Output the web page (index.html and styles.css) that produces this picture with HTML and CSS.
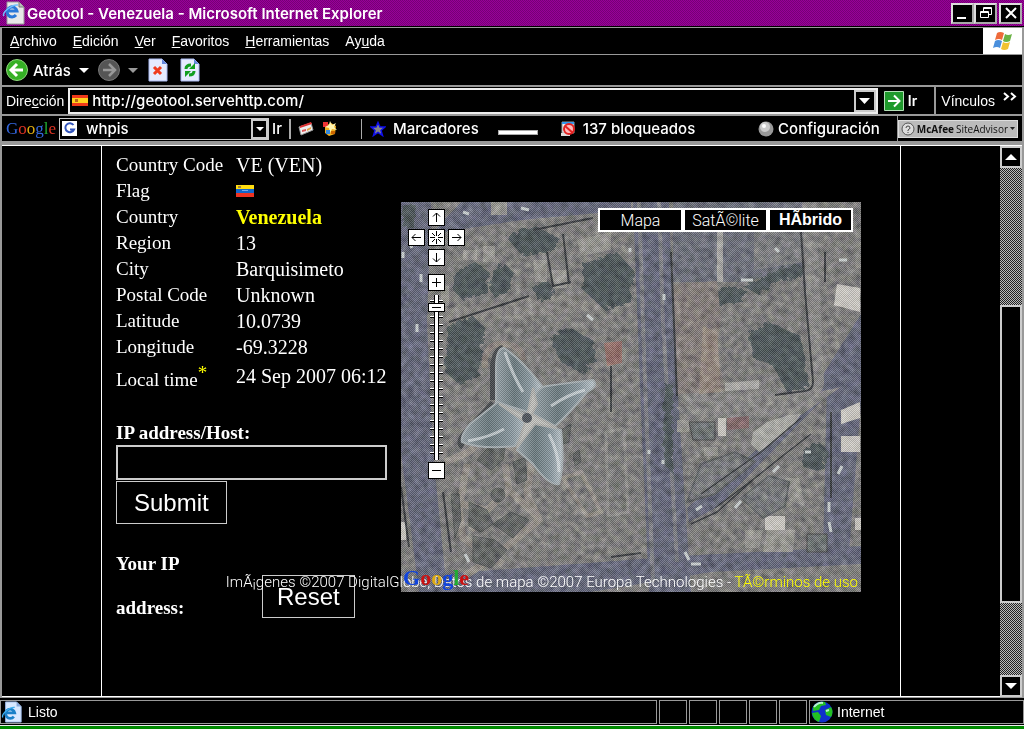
FILE: index.html
```html
<!DOCTYPE html>
<html lang="es">
<head>
  <meta charset="UTF-8">
  <meta name="viewport" content="width=device-width, initial-scale=1.0">
  <title>Geotool - Venezuela</title>
  <link rel="stylesheet" href="styles.css">
</head>
<body>

<header class="titlebar">
  <svg class="icon-page" width="24" height="24" viewBox="0 0 24 24">
    <path d="M6 1h12l5 5v17H6z" fill="#e8e8e8" stroke="#999"/>
    <path d="M18 1v5h5" fill="#bbb" stroke="#777"/>
    <path d="M15 14a5 5 0 1 1 1-4H7" fill="none" stroke="#2a78d8" stroke-width="3"/>
    <path d="M3 15c-3-3 8-12 14-11" fill="none" stroke="#70c0ff" stroke-width="1.5"/>
  </svg>
  <h1>Geotool - Venezuela - Microsoft Internet Explorer</h1>
  <div class="window-buttons">
    <button aria-label="Minimizar"><svg width="16" height="16"><path d="M2 13h9" stroke="#fff" stroke-width="2"/></svg></button>
    <button aria-label="Restaurar"><svg width="16" height="16" fill="none" stroke="#fff"><path d="M5.500 6V2.500h8V9.500H11M5 3.500h9"/><path d="M2.500 6.500h8v6h-8zM2 7.500h9"/></svg></button>
    <button class="close" aria-label="Cerrar"><svg width="16" height="16"><path d="M3 3l10 10M13 3L3 13" stroke="#fff" stroke-width="2"/></svg></button>
  </div>
</header>

<nav class="menubar">
  <a href="#"><u>A</u>rchivo</a>
  <a href="#"><u>E</u>dición</a>
  <a href="#"><u>V</u>er</a>
  <a href="#"><u>F</u>avoritos</a>
  <a href="#"><u>H</u>erramientas</a>
  <a href="#">Ay<u>u</u>da</a>
  <div class="throbber">
    <svg width="20" height="20" viewBox="0 0 20 20">
      <path d="M4 2q3-2 7 0L9 9Q6 7 2 9z" fill="#ee6a3a"/>
      <path d="M12 3q3 2 7 0l-2 7q-4 2-7 0z" fill="#6bb345"/>
      <path d="M2 10q3-2 7 0l-2 7q-3-2-7 0z" fill="#4a8fdc"/>
      <path d="M10 11q3 2 7 0l-2 7q-4 2-7 0z" fill="#f2c230"/>
    </svg>
  </div>
</nav>

<div class="toolbar">
  <button class="tool">
    <svg width="22" height="22" viewBox="0 0 22 22"><circle cx="11" cy="11" r="10.500" fill="#35b025" stroke="#8fd87c"/><path d="M17 11H6M11 5l-6 6 6 6" fill="none" stroke="#fff" stroke-width="3"/></svg>
    <span>Atrás</span>
  </button>
  <svg class="caret" width="10" height="5"><path d="M0 0h10L5 5z" fill="#fff"/></svg>
  <button class="tool forward" aria-label="Adelante">
    <svg width="22" height="22" viewBox="0 0 22 22"><circle cx="11" cy="11" r="10.500" fill="#555" stroke="#777"/><path d="M5 11h11M11 5l6 6-6 6" fill="none" stroke="#999" stroke-width="2.500"/></svg>
  </button>
  <svg class="caret" width="10" height="5"><path d="M0 0h10L5 5z" fill="#999"/></svg>
  <button class="tool stop" aria-label="Detener">
    <svg width="20" height="24" viewBox="0 0 20 24"><path d="M1 1h13l5 5v17H1z" fill="#e6ecff" stroke="#a8b8f0"/><path d="M14 1l5 5h-5z" fill="#6688dd"/><path d="M6 9l7 7M13 9l-7 7" stroke="#f03c1e" stroke-width="3"/></svg>
  </button>
  <button class="tool refresh" aria-label="Actualizar">
    <svg width="20" height="24" viewBox="0 0 20 24"><path d="M1 1h13l5 5v17H1z" fill="#e6ecff" stroke="#a8b8f0"/><path d="M14 1l5 5h-5z" fill="#6688dd"/><path d="M6 11q0-4 5-4M14 13q0 4-5 4" fill="none" stroke="#12a020" stroke-width="3"/><path d="M15 5v6H9zM5 19v-6h6z" fill="#12a020"/></svg>
  </button>
</div>

<form class="addressbar">
  <label for="address">Dire<u>c</u>ción</label>
  <div class="address-box">
    <svg width="16" height="11"><path d="M0 0h16v11H0z" fill="#f03a1a"/><path d="M0 3h16v5H0z" fill="#ffd21e"/><path d="M3 4h3v3H3z" fill="#b8661a"/></svg>
    <input id="address" type="text" value="http://geotool.servehttp.com/">
    <button class="drop" type="button" aria-label="Ver direcciones"><svg width="11" height="6"><path d="M0 0h11L5.500 6z" fill="#fff"/></svg></button>
  </div>
  <button class="go" type="button">
    <svg width="20" height="20"><path d="M.5.500h19v19H.5z" fill="#1f9a2c" stroke="#b5e0b8"/><path d="M4 10h11M10 4.500l5.500 5.500-5.500 5.500" fill="none" stroke="#fff" stroke-width="2"/></svg>
    <span>Ir</span>
  </button>
  <a class="links" href="#">Vínculos <svg width="14" height="17" fill="none" stroke="#fff" stroke-width="2"><path d="M1 1l4 3.500L1 8M8 1l4 3.500L8 8"/></svg></a>
</form>

<div class="googlebar">
  <a class="google-logo" href="#"><span class="b">G</span><span class="r">o</span><span class="y">o</span><span class="b">g</span><span class="g">l</span><span class="r">e</span></a>
  <div class="search-box">
    <svg width="15" height="15"><path d="M0 0h15v15H0z" fill="#fff"/><path d="M11.500 4A4.500 4.500 0 1 0 12 8.500H8" fill="none" stroke="#3355bb" stroke-width="2"/></svg>
    <input type="text" value="whpis" aria-label="Buscar en Google">
    <button class="drop" aria-label="Historial"><svg width="8" height="4"><path d="M0 0h8L4 4z" fill="#fff"/></svg></button>
  </div>
  <button class="search-go">Ir</button>
  <div class="extras">
    <svg width="16" height="16"><path d="M1 6l12-4 2 7-12 5z" fill="#eee" stroke="#999"/><path d="M2 5l11-4 1 2-12 4z" fill="#d33"/><path d="M4 9l4-1v2l-4 1z" fill="#d55"/><path d="M9 8l4-2v2l-4 2z" fill="#e8a040"/></svg>
    <svg width="16" height="16"><path d="M3 5l6-3 5 3-1 8-6 2-4-3z" fill="#f0b020"/><path d="M1 1h5v5H1z" fill="#e33"/><path d="M8 0l2 4 4-2-2 4 3 3-5-1-2 4-1-5-4-1 4-2z" fill="#fff4b0"/><path d="M4 9h4v4H4z" fill="#38d"/><path d="M9 10h4v3H9z" fill="#c60"/></svg>
  </div>
  <button class="bookmarks">
    <svg width="16" height="16" viewBox="0 0 16 16"><path d="M8 1.500l2 4.500h5l-4 3.500 1.500 5L8 11.500l-4.500 3 1.500-5L1 6h5z" fill="#888" stroke="#1010ee" stroke-width="1.500"/></svg>
    Marcadores
  </button>
  <div class="pagerank"></div>
  <button class="blocked">
    <svg width="16" height="16"><path d="M1 1h12v11H1z" fill="#eee" stroke="#999"/><path d="M1 1h12v2H1z" fill="#39e"/><path d="M0 12h9v3H0z" fill="#ddd"/><circle cx="8" cy="8" r="5" fill="#fbb" stroke="#e32222" stroke-width="2"/><path d="M4 5l8 7" stroke="#e32222" stroke-width="2"/></svg>
    137 bloqueados
  </button>
  <button class="settings">
    <svg width="16" height="16"><circle cx="8" cy="8" r="7.500" fill="#999"/><circle cx="7" cy="6" r="5" fill="#ccc"/><circle cx="6" cy="5" r="2" fill="#fff"/></svg>
    Configuración
  </button>
  <div class="advisor">
    <button>
      <svg width="14" height="14"><circle cx="7" cy="7" r="6" fill="#ddd" stroke="#555"/><path d="M5 6q0-2 2-2t2 2q0 1-2 2v1M7 10v1" fill="none" stroke="#444"/></svg>
      <b>McAfee</b> SiteAdvisor
      <svg width="5" height="3"><path d="M0 0h5L2.500 3z" fill="#222"/></svg>
    </button>
  </div>
</div>

<div class="viewport">
  <main class="page">
    <section class="info">
      <table>
        <tr><th>Country Code</th><td>VE (VEN)</td></tr>
        <tr><th>Flag</th><td><svg class="flag" width="18" height="12"><path d="M0 0h18v4H0z" fill="#ffdd11"/><path d="M0 4h18v4H0z" fill="#1166cc"/><path d="M0 8h18v4H0z" fill="#ee3322"/><path d="M2 1h3v2H2z" fill="#a08040"/><path d="M6 5h6v1H6z" fill="#77aaee"/></svg></td></tr>
        <tr><th>Country</th><td><strong>Venezuela</strong></td></tr>
        <tr><th>Region</th><td>13</td></tr>
        <tr><th>City</th><td>Barquisimeto</td></tr>
        <tr><th>Postal Code</th><td>Unknown</td></tr>
        <tr><th>Latitude</th><td>10.0739</td></tr>
        <tr><th>Longitude</th><td>-69.3228</td></tr>
        <tr class="time"><th>Local time<a href="#">*</a></th><td>24 Sep 2007 06:12</td></tr>
      </table>
      <form class="lookup">
        <label for="host">IP address/Host:</label>
        <input id="host" type="text">
        <button type="button">Submit</button>
        <div class="your-ip">
          <p>Your IP address:</p>
          <button type="reset">Reset</button>
        </div>
      </form>
    </section>

    <section class="map">
      <svg class="satellite" viewBox="0 0 460 390" preserveAspectRatio="xMidYMid slice">
        <defs>
          <filter id="grain" x="0" y="0" width="100%" height="100%" color-interpolation-filters="sRGB">
            <feTurbulence type="fractalNoise" baseFrequency="0.15" numOctaves="4" seed="7"/>
            <feColorMatrix values="1 0.4 0 0 -0.2  0.9 0.5 0 0 -0.2  0.9 0.3 0.2 0 -0.2  0 0 0 0 1"/>
          </filter>
          <filter id="rough" x="-10%" y="-10%" width="120%" height="120%"><feTurbulence baseFrequency="0.12" numOctaves="2" seed="3"/><feDisplacementMap in="SourceGraphic" scale="7"/></filter>
          <pattern id="dither" width="2" height="2" patternUnits="userSpaceOnUse">
            <path d="M0 0h1v1H0zM1 1h1v1H1z" fill="#000"/><path d="M1 0h1v1H1zM0 1h1v1H0z" fill="#fff"/>
          </pattern>
          <linearGradient id="petal" x1="0" y1="0" x2="1" y2="0">
            <stop offset="0" stop-color="#9aa6ac"/><stop offset=".4" stop-color="#6a7a7f"/><stop offset=".75" stop-color="#8d9ca4"/><stop offset="1" stop-color="#c4ced4"/>
          </linearGradient>
        </defs>
        <rect width="460" height="390" fill="#7e7d7c"/>
        <!-- streets -->
        <g fill="#63667a">
          <path d="M0 0h30l-4 120 6 130 14 140H18L0 250z"/>
          <path d="M30 32l90-14 110-10V0H60zM232 0h36l4 120 18 270h-42l-8-180z"/>
          <path d="M460 112v46L318 304l-30 16-2-14 110-92z"/>
          <path d="M40 372l240-18 180-10v18l-150 8-120 20H40z"/>
          <path d="M272 0h130v66l-60 14h-70z" fill="#6b6e7a"/>
          <path d="M426 180l34-40v60l-12 150h-26z"/>
        </g>
        <path d="M238 0l6 180 8 200M258 0l4 120 14 240" fill="none" stroke="#7d7e84" stroke-width="4"/>
        <path d="M408 0l8 180q0 8-9 9l-100 12-22-6" fill="none" stroke="#8a8988" stroke-width="14"/>
        <path d="M30 108l120-14 82-4v14L160 112l-126 10z" fill="#888683"/>
        <path d="M275 205l120-10 45-10-40 28-110 8z" fill="#878685"/>
        <!-- trees -->
        <g fill="#4b5558" filter="url(#rough)">
          <path d="M104 34l26-12 26 12-6 12-30 6z"/>
          <path d="M52 68l20-10 14 10-2 20-24 8-10-10z"/>
          <path d="M92 66l10-6 10 10-6 16-14 8-6-10z"/>
          <path d="M180 60l34-12 18 20-4 30-26 8-22-20z"/>
          <path d="M148 134l18-10 24 12 4 22-14 12-22-12z"/>
          <path d="M46 122l24-10 12 12-6 50-20 6-14-12z"/>
          <path d="M346 130l20-12 32 14 8 52-22 4-14-26-20-8z"/>
          <path d="M306 90l20-8 20 6-8 10-24 4zM340 82l40-18 20-2v10l-30 8-14 12z"/>
          <path d="M130 84l12-10 10 12-4 8-12 4zM400 246l16-8 10 10-6 20-20-6z"/>
          <path d="M262 180l8 0 0 90-9-10zM0 0h12v24H0z"/>
        </g>
        <!-- roofs -->
        <path d="M272 82l44-3 4 38-4 30 8 42-48 3z" fill="#857d7a"/>
        <path d="M302 124l14 6 4 60-22 2z" fill="#93857c"/>
        <path d="M203 141l18-2v22l-15 3z" fill="#956d67"/>
        <path d="M316 30h6v50h-6zM324 181l34-3v9l-34 2z" fill="#aaa9a6"/>
        <path d="M353 30h50v30l-50 8z" fill="#7c7d80"/>
        <g fill="#999893">
          <path d="M90 0h16v13H90zM176 38l34-8v18l-30 6zM132 58h14v22h-12zM150 68h16v18h-14zM82 44h12v16H82zM62 48h14v10H62z"/>
          <path d="M352 230l14-10 22-7 12-1-8 12-16 14-18 12-8-8z" fill="#adada8"/>
          <path d="M317 216h8v18h-8zM364 314h20v14h-20zM440 208l19-8v16l-19 6zM440 234h19v16h-19zM436 82l23 4v24l-26-7zM0 320h5v18H0zM454 316h6v12h-6z" fill="#cfccc6"/>
          <path d="M276 218h12v12h-12zM303 245h14v9h-14zM366 328h28l-2 22h-30zM384 276h14l6 28-16-6zM344 328h18l-4 18h-14zM40 84h8v20h-8zM208 18l18-4v14z"/>
        </g>
        <path d="M288 220h26v18h-22zM406 332h20v18h-20z" fill="#6b7172" stroke="#444"/>
        <path d="M326 216l22-2v12l-22 2z" fill="#85686a"/>
        <path d="M205 230l18-4 4 84-20 4z" fill="#7a7a79" stroke="#908f8c" stroke-width="3"/>
        <path d="M300 262l34-12 20 10-40 32-28 8zM340 296l28-22 20 6-4 24-22 12z" fill="#76787b" stroke="#5c6062" stroke-width="2"/>
        <g fill="none" stroke="#34373b" stroke-width="2">
          <path d="M400 30l4 60 8 90q0 8-8 9l-30 4M146 50l6 34 18-4M162 32l6 50M48 120l80-26M270 50l6 144M210 164v46M0 285l8 60M42 290l8 60M210 355l30-4M430 210v86M424 50v30M192 16l-60 12"/>
          <path d="M314 306l40-30 30-24 26-20M290 322l26-12 36-32M300 292l60-42 40-34" stroke-width="1.500"/>
        </g>
        <!-- garden paths -->
        <g fill="none" stroke="#98928b" stroke-width="7">
          <path d="M44 260l24-10 14-14 50 16-6 40 12 26-44 36-30 20M66 262l-8 44 4 30 40 26M60 302l26 6 22-20 30 28M108 288l-4-26M86 308l-16 20"/>
          <path d="M84 166q-2-26 20-24 18 2 18 16" stroke-width="6" stroke="#8f867f"/>
          <path d="M162 276l24 38 14-4-20-40z" stroke-width="4"/>
        </g>
        <g fill="#5f6261" stroke="#505454">
          <path d="M76 258l16-18 12 6-2 12-12 10zM68 300l18 8 6 14-12 8-12-6zM92 322l18-12 18 8-16 18zM72 334l22 4 12 10-16 18-18-6zM112 260l12-4 2 22-10 4z"/>
          <circle cx="97" cy="293" r="7"/>
          <path d="M50 292h8l2 26-6 18zM160 228l10-6-2 18-6 2zM172 252l6-4 2 12-6 4z"/>
        </g>
        <rect width="460" height="390" filter="url(#grain)" style="mix-blend-mode: overlay" opacity=".35"/>
        <!-- flower shaped roof -->
        <g fill="none" stroke="#44484b" stroke-width="6">
          <path d="M92 198V164q2-16 10-18"/>
          <path d="M92 201l-28 30q-8 10-2 14"/>
        </g>
        <g fill="url(#petal)" stroke="#a9b2b6" stroke-width="2">
          <path d="M95 200V166q0-20 8-20 16 10 38 38l-14 26z"/>
          <path d="M132 212q-2-26 14-28 28-4 46-6 6 6-6 12-18 22-32 34z"/>
          <path d="M128 214l-31-14-28 22q-10 12-8 18 20 8 53 4z"/>
          <path d="M128 220l-12 28 16 14q16 22 26 20 6-20 2-54z"/>
          <path d="M136 202l-5 10 25 14-22-4-18 24 8-26-26-18 28 12 6-28z" fill="#c4c4c0" stroke="#b4b4b0"/>
        </g>
        <path d="M104 150q8 24 18 40M150 204q18-12 34-16M67 239q22-4 36-12M148 232q10 20 10 38" fill="none" stroke="#e4eaec" stroke-width="3" opacity=".7"/>
        <circle cx="126" cy="216" r="5" fill="#4e545c"/>
        <!-- cars -->
        <path d="M8 40l3 6M16 122v8M20 72v8M2 50v6M186 113l6 5M229 46v4M263 92v6M248 248v4M262 258v4M284 350l4 8M290 362h10M295 308l6-4M334 306l6-7M372 270l6-6M404 250h6M437 272l4-8M428 300v10M428 320l2 10M64 352l4 8M438 58h8M374 46l4 4M62 10l6 2M120 6l8 2M340 78h12" fill="none" stroke="#cdd4d4" stroke-width="3"/>
        <rect width="460" height="390" fill="url(#dither)" opacity=".15"/>
      </svg>

      <div class="pan">
        <button class="up" aria-label="Arriba"><svg width="15" height="15"><path d="M7.500 12V3M4 6.500L7.500 3 11 6.500"/></svg></button>
        <button class="left" aria-label="Izquierda"><svg width="15" height="15"><path d="M12 7.500H3M6.500 4L3 7.500 6.500 11"/></svg></button>
        <button class="center" aria-label="Centrar"><svg width="15" height="15"><path d="M7.500 1v5M7.500 9v5M1 7.500h5M9 7.500h5M3 3l3 3M12 3L9 6M3 12l3-3M12 12L9 9"/></svg></button>
        <button class="right" aria-label="Derecha"><svg width="15" height="15"><path d="M3 7.500h9M8.500 4L12 7.500 8.500 11"/></svg></button>
        <button class="down" aria-label="Abajo"><svg width="15" height="15"><path d="M7.500 3v9M4 8.500L7.500 12 11 8.500"/></svg></button>
      </div>
      <div class="zoom">
        <button aria-label="Acercar"><svg width="15" height="15"><path d="M7.500 3v9M3 7.500h9"/></svg></button>
        <input type="range" min="0" max="19" value="18" aria-label="Zoom">
        <button aria-label="Alejar"><svg width="15" height="15"><path d="M3 7.500h9"/></svg></button>
      </div>
      <div class="map-types">
        <button>Mapa</button>
        <button>SatÃ©lite</button>
        <button class="active">HÃbrido</button>
      </div>
      <p class="copyright">ImÃ¡genes ©2007 DigitalGlobe, Datos de mapa ©2007 Europa Technologies - <a href="#">TÃ©rminos de uso</a></p>
      <a class="google-logo map-logo" href="#"><span class="b">G</span><span class="r">o</span><span class="y">o</span><span class="b">g</span><span class="g">l</span><span class="r">e</span></a>
    </section>
  </main>

  <div class="scrollbar">
    <button aria-label="Subir"><svg width="12" height="6"><path d="M0 6h12L6 0z" fill="#fff"/></svg></button>
    <div class="track"><div class="thumb"></div></div>
    <button aria-label="Bajar"><svg width="12" height="6"><path d="M0 0h12L6 6z" fill="#fff"/></svg></button>
  </div>
</div>

<footer class="statusbar">
  <div class="status">
    <svg width="22" height="22" viewBox="0 0 24 24"><path d="M5 1h12l5 5v17H5z" fill="#d8e8ff" stroke="#99b8e8"/><path d="M17 1v5h5" fill="#88a8d8"/><path d="M14 17a5 5 0 1 1 1-4H6" fill="none" stroke="#1a80c8" stroke-width="3"/><path d="M2 18c-2-4 8-12 13-11" fill="none" stroke="#40b0f0" stroke-width="1.500"/></svg>
    Listo
  </div>
  <div class="cell"></div>
  <div class="cell"></div>
  <div class="cell"></div>
  <div class="cell"></div>
  <div class="cell"></div>
  <div class="zone">
    <svg width="22" height="22"><circle cx="11" cy="11" r="10.500" fill="#1030cc"/><path d="M2 6q5-6 12-5l1 3-5 1-2 4-6 1zM1 12l6-1 3 4-2 6q-6-2-7-9zM14 9l6-3q3 5 0 10l-5-2z" fill="#22c022"/><path d="M3 6q4-5 9-4M15 10l3-1" fill="none" stroke="#b8f0d0" stroke-width="2"/></svg>
    Internet
  </div>
</footer>
<div class="taskbar"></div>

</body>
</html>
```

FILE: styles.css
```css
* {
  box-sizing: border-box;
}
body {
  margin: 0;
  height: 100vh;
  display: flex;
  flex-direction: column;
  background: #000;
  color: #fff;
  font-family: "Liberation Sans", Arial, sans-serif;
  font-size: 14px;
  overflow: hidden;
}
button, input {
  margin: 0;
  padding: 0;
  border: 0;
  border-radius: 0;
  background: none;
  color: inherit;
  font: inherit;
  outline: none;
}
button {
  display: flex;
  align-items: center;
  justify-content: center;
  flex-shrink: 0;
}
svg {
  display: block;
  flex-shrink: 0;
}
a {
  color: inherit;
  text-decoration: none;
}

/* title bar */
.titlebar {
  display: flex;
  align-items: center;
  height: 26px;
  padding: 0 2px 0 1px;
  background: repeating-conic-gradient(#990099 0 25%, #770077 0 50%) 0 0 / 2px 2px;
}
.titlebar h1 {
  flex: 1;
  margin: 0 0 0 2px;
  font-family: Inter, sans-serif;
  font-size: 15px;
  font-weight: 600;
}
.window-buttons {
  display: flex;
}
.window-buttons button {
  width: 23px;
  height: 21px;
  background: #000;
  border: 2px solid #ddd;
  border-right-color: #aaa;
  border-bottom-color: #aaa;
}
.window-buttons .close {
  margin-left: 2px;
}

/* bars */
.menubar, .toolbar, .addressbar, .googlebar {
  display: flex;
  align-items: center;
  border: 2px solid #999;
  border-bottom: 0;
}
.menubar {
  height: 27px;
  margin-top: 1px;
  padding-left: 8px;
  gap: 16px;
  border-top-width: 1px;
}
.throbber {
  display: flex;
  align-items: center;
  justify-content: center;
  width: 39px;
  height: 100%;
  margin-left: auto;
  background: #fff;
}
.toolbar {
  height: 31px;
  padding-left: 4px;
  border-top-width: 1px;
  font-family: Inter, sans-serif;
  font-size: 15px;
  font-weight: 500;
}
.tool span {
  margin-left: 5px;
}
.toolbar .caret {
  margin-left: 8px;
}
.forward {
  margin-left: 9px;
}
.stop {
  margin-left: 10px;
}
.refresh {
  margin-left: 12px;
}
.addressbar {
  height: 29px;
  padding-left: 4px;
}
.address-box {
  display: flex;
  align-items: center;
  flex: 1;
  height: 26px;
  margin-left: 4px;
  padding-left: 2px;
  border: 2px solid #eee;
}
.address-box input {
  flex: 1;
  min-width: 0;
  margin-left: 4px;
  font-family: Inter, sans-serif;
  font-size: 15px;
  font-weight: 500;
}
.drop {
  width: 22px;
  height: 22px;
  border: 2px solid #ccc;
}
.go {
  margin-left: 6px;
  font-family: Inter, sans-serif;
  font-weight: 600;
}
.go span {
  margin-left: 4px;
}
.links {
  display: flex;
  align-items: center;
  gap: 8px;
  height: 100%;
  margin-left: 17px;
  padding: 0 5px 0 5px;
  border-left: 2px solid #999;
}
.googlebar {
  height: 27px;
  padding-left: 4px;
  font-family: Inter, sans-serif;
  font-size: 15px;
  font-weight: 500;
}
.google-logo {
  font-family: "Liberation Serif", serif;
  font-size: 17px;
  font-weight: 400;
}
.b { color: #3366dd; }
.r { color: #dd3322; }
.y { color: #ddaa11; }
.g { color: #22aa33; }
.search-box {
  display: flex;
  align-items: center;
  width: 210px;
  height: 22px;
  margin-left: 3px;
  padding-left: 2px;
  border: 1px solid #ccc;
}
.search-box input {
  flex: 1;
  min-width: 0;
  margin-left: 9px;
}
.search-box .drop {
  width: 17px;
  height: 20px;
}
.search-go {
  margin-left: 3px;
}
.extras {
  display: flex;
  align-items: center;
  gap: 8px;
  width: 73px;
  height: 20px;
  margin-left: 7px;
  padding-left: 7px;
  border-left: 2px solid #aaa;
  border-right: 1px solid #aaa;
}
.bookmarks, .blocked, .settings {
  gap: 6px;
}
.bookmarks {
  gap: 7px;
  margin-left: 8px;
}
.pagerank {
  width: 40px;
  height: 5px;
  margin: 7px 23px 0 19px;
  background: #fff;
  border: 1px solid #aaa;
}
.settings {
  gap: 4px;
  margin-left: auto;
}
.advisor {
  display: flex;
  align-items: center;
  height: 100%;
  margin-left: 17px;
  padding-right: 4px;
  border-left: 1px solid #999;
}
.advisor button {
  gap: 2px;
  height: 18px;
  padding: 0 2px;
  background: #bbb;
  border: 1px solid #ddd;
  color: #111;
  font-family: "Open Sans", sans-serif;
  font-size: 10px;
  font-weight: 400;
}

/* page area */
.viewport {
  display: flex;
  flex: 1;
  min-height: 0;
  border: 2px solid #999;
  border-top: 4px solid #999;
  border-bottom-width: 1px;
  box-shadow: inset 0 1px #fff, inset 0 -1px #fff;
}
.page {
  display: flex;
  align-items: flex-start;
  width: 100%;
  max-width: 800px;
  margin: 0 auto;
  padding: 7px 0 0 14px;
  border-left: 1px solid #fff;
  border-right: 1px solid #fff;
  align-self: stretch;
  font-family: "Liberation Serif", "Times New Roman", serif;
  font-size: 19px;
}
.info {
  width: 285px;
  flex-shrink: 0;
}
table {
  border-collapse: collapse;
}
tr {
  height: 26px;
}
th, td {
  padding: 0;
  text-align: left;
  line-height: 24px;
  font-weight: 400;
  white-space: nowrap;
}
th {
  width: 120px;
}
td {
  font-size: 20px;
}
.time {
  height: 32px;
}
.time th {
  vertical-align: bottom;
}
td strong {
  color: #ff0;
}
.time a {
  position: relative;
  top: -7px;
  color: #ff0;
}
.lookup {
  margin-top: 29px;
  font-weight: 700;
}
.lookup label {
  display: block;
  line-height: 24px;
}
.lookup input {
  display: block;
  width: 271px;
  height: 35px;
  border: 2px solid #ccc;
}
.lookup button {
  height: 43px;
  padding: 0 17px;
  border: 1px solid #ccc;
  font-family: "Liberation Sans", Arial, sans-serif;
  font-size: 24px;
  font-weight: 400;
}
.lookup input + button {
  margin-top: 1px;
}
.your-ip {
  display: flex;
  align-items: flex-end;
  margin-top: 18px;
}
.your-ip p {
  width: 86px;
  margin: 0;
  line-height: 44px;
}
.your-ip button {
  margin: 0 0 12px 60px;
  padding: 0 14px;
}

/* map */
.map {
  position: relative;
  width: 460px;
  height: 390px;
  margin-top: 50px;
  font-family: "Liberation Sans", Arial, sans-serif;
}
.satellite {
  width: 100%;
  height: 100%;
}
.pan, .zoom {
  position: absolute;
  left: 7px;
}
.pan {
  top: 7px;
  display: grid;
  grid-template-areas: ". up ." "left center right" ". down .";
  gap: 3px;
}
.up { grid-area: up; }
.left { grid-area: left; }
.center { grid-area: center; }
.right { grid-area: right; }
.down { grid-area: down; }
.pan button, .zoom button {
  width: 17px;
  height: 17px;
  background: #fff;
  border: 1px solid #000;
}
.pan path, .zoom path {
  fill: none;
  stroke: #000;
}
.zoom {
  top: 72px;
  left: 27px;
  display: flex;
  flex-direction: column;
  align-items: center;
}
.zoom input {
  appearance: none;
  writing-mode: vertical-lr;
  direction: rtl;
  width: 17px;
  height: 165px;
  margin: 4px 0 2px;
  background:
    linear-gradient(90deg, #000 1px, #fff 1px 4px, #000 4px) 6px 0 / 5px 100% no-repeat,
    linear-gradient(transparent 5px, #fff 5px 6px, #000 6px 7px, transparent 7px) 2px 0 / 13px 8px repeat-y;
}
.zoom input::-webkit-slider-thumb {
  appearance: none;
  width: 17px;
  height: 9px;
  background: linear-gradient(#000, #000) center / 9px 1px no-repeat #fff;
  border: 1px solid #000;
}
.map-types {
  position: absolute;
  top: 6px;
  right: 8px;
  display: flex;
}
.map-types button {
  width: 85px;
  height: 24px;
  background: #000;
  border: 2px solid #fff;
  font-family: Roboto, sans-serif;
  font-size: 16px;
  font-weight: 300;
}
.map-types .active {
  font-family: "Liberation Sans", Arial, sans-serif;
  font-weight: 700;
}
.copyright {
  position: absolute;
  right: 3px;
  bottom: 1px;
  margin: 0;
  font-family: Roboto, sans-serif;
  font-size: 15px;
  font-weight: 300;
  line-height: 18px;
  white-space: nowrap;
}
.copyright a {
  color: #ff0;
}
.map-logo {
  position: absolute;
  left: 2px;
  bottom: 1px;
  font-size: 22px;
  font-weight: 700;
  line-height: 26px;
}
.map-logo .b { color: #1144dd; }
.map-logo .r { color: #cc1111; }

/* scrollbar */
.scrollbar {
  display: flex;
  flex-direction: column;
  width: 22px;
  padding-top: 1px;
}
.scrollbar button {
  height: 22px;
  border: 2px solid #ccc;
}
.track {
  flex: 1;
  padding-top: 137px;
  background: repeating-conic-gradient(#bbb 0 25%, #222 0 50%) 0 0 / 2px 2px;
}
.thumb {
  height: 298px;
  background: #000;
  border: 2px solid #ccc;
}

/* status bar */
.statusbar {
  display: flex;
  gap: 2px;
  height: 24px;
  margin: 2px 0 1px;
}
.status, .cell, .zone {
  display: flex;
  align-items: center;
  border: 1px solid #999;
}
.status {
  flex: 1;
  gap: 5px;
}
.cell {
  width: 28px;
}
.zone {
  gap: 4px;
  width: 215px;
  padding-left: 1px;
}
.taskbar {
  height: 4px;
  background: #008800;
  border-top: 1px solid #eee;
}
```
